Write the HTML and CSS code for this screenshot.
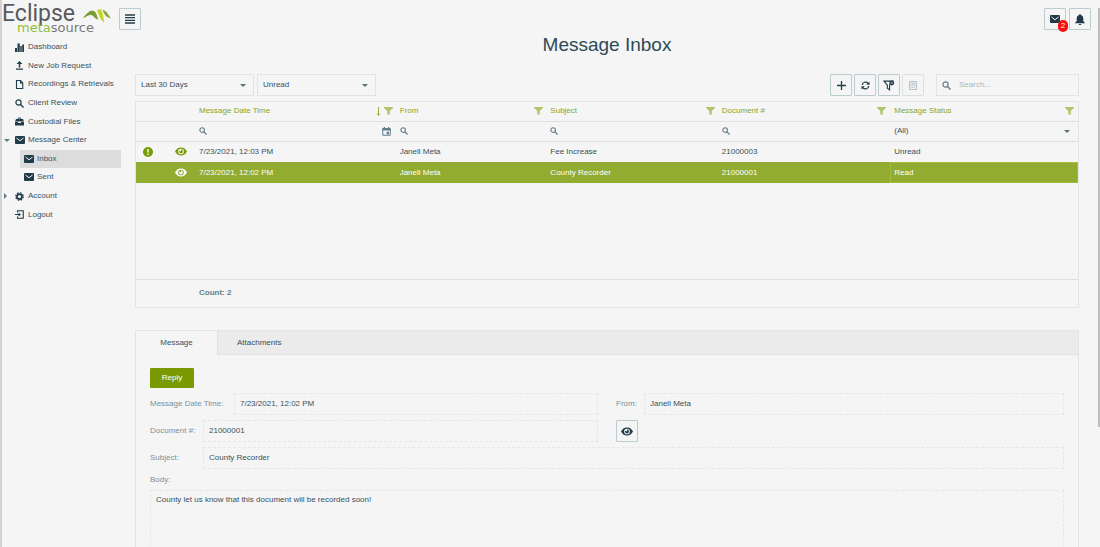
FILE: index.html
```html
<!DOCTYPE html>
<html lang="en">
<head>
<meta charset="utf-8">
<title>Message Inbox</title>
<link rel="stylesheet" href="styles.css">
</head>
<body>
<svg class="defs" aria-hidden="true">
  <symbol id="mail" viewBox="0 0 20 16"><path d="M2 0h16a2 2 0 0 1 2 2v12a2 2 0 0 1-2 2H2a2 2 0 0 1-2-2V2a2 2 0 0 1 2-2z"/><path d="M3 4l7 5.500L17 4" fill="none" stroke="#f5f5f5" stroke-width="2"/></symbol>
  <symbol id="eye" viewBox="0 0 24 18"><path fill-rule="evenodd" d="M12 1C6.500 1 2.300 4.300 0 9c2.300 4.700 6.500 8 12 8s9.700-3.300 12-8c-2.300-4.700-6.500-8-12-8zm0 2.300a5.700 5.700 0 1 1 0 11.400 5.700 5.700 0 0 1 0-11.400z"/><path d="M12 5.200a3.800 3.800 0 1 1-3.800 3.800c0-.7.200-1.300.4-1.800.3.900 1 1.400 1.800 1.400 1.100 0 1.900-.8 1.900-1.800 0-.7-.4-1.300-1-1.600z"/></symbol>
  <symbol id="search" viewBox="0 0 18 18"><circle cx="7" cy="7" r="5.200" fill="none" stroke="currentColor" stroke-width="2.400"/><path d="M11 11l6 6" stroke="currentColor" stroke-width="2.800"/></symbol>
  <symbol id="funnel" viewBox="0 0 18 16"><path d="M0 0h18v2l-6.500 6v8l-5-2V8L0 2z"/></symbol>
</svg>
<div class="app">
  <header class="topbar">
    <a class="logo" href="#" aria-label="Eclipse metasource">
      <span class="logo-name">Eclipse</span>
      <svg class="logo-mark" viewBox="0 0 28 14" aria-hidden="true"><path d="M0 9C4 4 8 0 11 2c3 2 3 6 4.500 8.500C12 10.500 11 6.500 8 6 5 5.500 3 8.500 0 9z" fill="#789f35"/><path d="M14 1l4-1c1.500 4 3 8 3 13.500C17.500 11 15.500 6 14 1z" fill="#c5d92d"/><path d="M19.500 1c4 .3 5.500 4.500 8.500 8.500-4-.8-7-4-8.500-8.500z" fill="#85a83c"/></svg>
      <span class="logo-sub"><b>meta</b>source</span>
    </a>
    <button class="icon-btn" aria-label="Toggle menu"><svg width="10" height="10" viewBox="0 0 10 10"><path d="M0 1h10M0 3.700h10M0 6.400h10M0 9h10" stroke="currentColor" stroke-width="1.300"/></svg></button>
    <div class="top-actions">
      <button class="icon-btn" aria-label="Messages"><svg width="10" height="8"><use href="#mail"/></svg><span class="badge">2</span></button>
      <button class="icon-btn" aria-label="Notifications"><svg width="10" height="11" viewBox="0 0 18 20"><path d="M9 0c1 0 1.500.7 1.500 1.600C13.500 2.300 15 5 15 8v5l3 3v1H0v-1l3-3V8c0-3 1.500-5.700 4.500-6.400C7.500.7 8 0 9 0zM6.500 18h5c0 1.200-1 2-2.500 2s-2.500-.8-2.500-2z"/></svg></button>
    </div>
  </header>

  <div class="columns">
    <nav class="sidebar">
      <ul>
        <li><a href="#"><svg viewBox="0 0 18 18"><path d="M0 10h4v8H0zM5 1h4.500v17H5zM10.500 6h3v12h-3zM14.500 3H18v15h-3.500z"/></svg>Dashboard</a></li>
        <li><a href="#"><svg viewBox="0 0 18 18"><path d="M9 0l6 6h-4.500v7h-3V6H3zM2 15h14v2.500H2z"/></svg>New Job Request</a></li>
        <li><a href="#"><svg viewBox="0 0 18 18"><path d="M3 1h8l4.500 5v11H3z" fill="none" stroke="currentColor" stroke-width="2.200"/><path d="M10 1v6h6z"/></svg>Recordings &amp; Retrievals</a></li>
        <li><a href="#"><svg><use href="#search"/></svg>Client Review</a></li>
        <li><a href="#"><svg viewBox="0 0 18 18"><path fill-rule="evenodd" d="M5 4l2-3h4l2 3h3l2 5H0l2-5zm2 0h4l-1-1.500H8zM0 10h6v2h6v-2h6v7H0z"/></svg>Custodial Files</a></li>
        <li class="open"><a href="#"><svg class="envelope"><use href="#mail"/></svg>Message Center</a></li>
        <li class="sub current"><a href="#" aria-current="page"><svg class="envelope"><use href="#mail"/></svg>Inbox</a></li>
        <li class="sub"><a href="#"><svg class="envelope"><use href="#mail"/></svg>Sent</a></li>
        <li class="closed"><a href="#"><svg viewBox="0 0 18 18"><circle cx="9" cy="9" r="5" fill="none" stroke="currentColor" stroke-width="3.500"/><circle cx="9" cy="9" r="7.500" fill="none" stroke="currentColor" stroke-width="2.500" stroke-dasharray="3.200 2.690"/></svg>Account</a></li>
        <li><a href="#"><svg viewBox="0 0 18 18"><path d="M5 5V1.500h11.500v15H5V13" fill="none" stroke="currentColor" stroke-width="2.200"/><path d="M0 8h7V5l5 4-5 4v-3H0z"/></svg>Logout</a></li>
      </ul>
    </nav>

    <main class="main">
      <h1>Message Inbox</h1>
      <div class="toolbar">
        <span class="select"><select aria-label="Period"><option>Last 30 Days</option></select></span>
        <span class="select"><select aria-label="Read state"><option>Unread</option></select></span>
        <div class="tools">
          <button class="icon-btn" aria-label="Add"><svg width="9" height="9" viewBox="0 0 9 9"><path d="M4.500 0v9M0 4.500h9" stroke="currentColor" stroke-width="1.300"/></svg></button>
          <button class="icon-btn" aria-label="Refresh"><svg width="9" height="9" viewBox="0 0 18 18"><path d="M2.500 8A6.500 6.500 0 0 1 14 4.500M15.500 10A6.500 6.500 0 0 1 4 13.500" fill="none" stroke="currentColor" stroke-width="2.400"/><path d="M17 1v6.500h-6.500zM1 17v-6.500h6.500z"/></svg></button>
          <button class="icon-btn" aria-label="Clear filter"><svg width="12" height="11" viewBox="0 0 22 20"><path d="M2 2h16l-6 7.500V18l-4-3V9.500z" fill="none" stroke="currentColor" stroke-width="2"/><circle cx="16" cy="5.500" r="4.500"/><path d="M14.500 4l3 3m0-3l-3 3" stroke="#f5f5f5" stroke-width="1"/></svg></button>
          <button class="icon-btn" aria-label="Export" disabled><svg width="8" height="9" viewBox="0 0 16 18"><path d="M1 1h14v16H1zM1 8h14M4 4.500h8M4 12.500h8" fill="none" stroke="currentColor" stroke-width="2"/></svg></button>
        </div>
        <label class="search"><svg width="9" height="9"><use href="#search"/></svg><input type="search" placeholder="Search..." aria-label="Search"></label>
      </div>

      <section class="grid">
        <table>
          <colgroup><col class="c-icon"><col class="c-icon"><col class="c-date"><col class="c-from"><col class="c-mid"><col class="c-mid"><col></colgroup>
          <thead>
            <tr>
              <th></th><th></th>
              <th><div class="cell">Message Date Time<span class="marks"><svg class="sort" viewBox="0 0 5 10"><path d="M2.500 0v9M1 7.500l1.500 2L4 7.500" fill="none" stroke="currentColor"/></svg><svg class="funnel"><use href="#funnel"/></svg></span></div></th>
              <th><div class="cell">From<svg class="funnel"><use href="#funnel"/></svg></div></th>
              <th><div class="cell">Subject<svg class="funnel"><use href="#funnel"/></svg></div></th>
              <th><div class="cell">Document #<svg class="funnel"><use href="#funnel"/></svg></div></th>
              <th><div class="cell">Message Status<svg class="funnel"><use href="#funnel"/></svg></div></th>
            </tr>
            <tr class="filters">
              <td></td><td></td>
              <td><div class="cell"><svg class="find"><use href="#search"/></svg><input aria-label="Filter date"><svg class="calendar" viewBox="0 0 18 18"><path d="M1.500 3h15v13.500h-15z" fill="none" stroke="currentColor" stroke-width="2"/><path d="M1 3h16v4H1zM3.500 0h2.500v4H3.500zM12 0h2.500v4H12zM9 9.500h5v5H9z"/></svg></div></td>
              <td><div class="cell"><svg class="find"><use href="#search"/></svg><input aria-label="Filter from"></div></td>
              <td><div class="cell"><svg class="find"><use href="#search"/></svg><input aria-label="Filter subject"></div></td>
              <td><div class="cell"><svg class="find"><use href="#search"/></svg><input aria-label="Filter document"></div></td>
              <td><span class="select"><select aria-label="Filter status"><option>(All)</option></select></span></td>
            </tr>
          </thead>
          <tbody>
            <tr>
              <td class="mark"><svg class="alert" viewBox="0 0 20 20"><circle cx="10" cy="10" r="10"/><path d="M10 4v7M10 13v3" stroke="#f5f5f5" stroke-width="3"/></svg></td>
              <td class="mark"><svg class="eye"><use href="#eye"/></svg></td>
              <td>7/23/2021, 12:03 PM</td><td>Janell Meta</td><td>Fee Increase</td><td>21000003</td><td>Unread</td>
            </tr>
            <tr class="selected">
              <td></td>
              <td class="mark"><svg class="eye"><use href="#eye"/></svg></td>
              <td>7/23/2021, 12:02 PM</td><td>Janell Meta</td><td>County Recorder</td><td>21000001</td><td class="focused">Read</td>
            </tr>
          </tbody>
        </table>
        <div class="grid-footer">Count: 2</div>
      </section>

      <section class="panel">
        <div class="tabs" role="tablist">
          <button role="tab" aria-selected="true">Message</button>
          <button role="tab" aria-selected="false">Attachments</button>
        </div>
        <form class="details">
          <button type="button" class="reply">Reply</button>
          <div class="pair">
            <div class="field wide"><label for="date">Message Date Time:</label><input id="date" value="7/23/2021, 12:02 PM" readonly></div>
            <div class="field short"><label for="from">From:</label><input id="from" value="Janell Meta" readonly></div>
          </div>
          <div class="pair">
            <div class="field"><label for="doc">Document #:</label><input id="doc" value="21000001" readonly></div>
            <button type="button" class="icon-btn" aria-label="View document"><svg width="12" height="9"><use href="#eye"/></svg></button>
          </div>
          <div class="field"><label for="subject">Subject:</label><input id="subject" value="County Recorder" readonly></div>
          <label class="body-label" for="body">Body:</label>
          <textarea id="body" readonly>County let us know that this document will be recorded soon!</textarea>
        </form>
      </section>
    </main>
  </div>
  <div class="scroll-thumb"></div>
</div>
</body>
</html>
```

FILE: styles.css
```css
* { box-sizing: border-box; }
body {
  margin: 0;
  background: #f5f5f5;
  color: #38515c;
  font: 8px/12px "Liberation Sans", Arial, sans-serif;
}
button, input, select, textarea { font: inherit; color: inherit; }
input, select, textarea { width: 100%; min-width: 0; margin: 0; border: 0; background: none; outline: 0; appearance: none; }
svg { display: block; flex: none; fill: currentColor; }
a { color: inherit; text-decoration: none; }
.defs { position: absolute; width: 0; height: 0; }

.app {
  height: 100vh;
  overflow: hidden;
  display: flex;
  flex-direction: column;
  border-left: 2px solid #d2d2d2;
}
.scroll-thumb { position: fixed; right: 0; top: 8px; width: 2px; height: 419px; background: #bdbdbd; }

.topbar { display: flex; align-items: flex-start; padding: 0 9px 0 0; height: 36px; }
.topbar .icon-btn { margin-top: 8px; }
.logo { display: grid; grid-template-columns: 81px 28px; width: 117px; }
.logo-name { font: 23px/27px Roboto, sans-serif; color: #58595c; }
.logo-mark { width: 28px; height: 14px; margin-top: 9px; }
.logo-sub { grid-column: 1 / 3; padding-left: 15px; margin-top: -6px; font: 13px/13px "DejaVu Sans", sans-serif; color: #77787b; }
.logo-sub b { font-weight: 400; color: #94bd3a; }
.top-actions { display: flex; gap: 3px; margin-left: auto; }

.icon-btn {
  position: relative;
  display: flex;
  align-items: center;
  justify-content: center;
  width: 22px;
  height: 22px;
  padding: 0;
  border: 1px solid #bccbd0;
  border-radius: 1px;
  background: none;
  color: #203c48;
}
.icon-btn:disabled { border-color: #dae1e3; color: #b5c0c4; }
.badge {
  position: absolute;
  right: -3px;
  bottom: -3px;
  width: 10px;
  height: 12px;
  border-radius: 5px;
  background: #f90d0d;
  color: #fff;
}

.columns { flex: 1; min-height: 0; display: flex; gap: 14px; padding-right: 21px; }
.sidebar { width: 119px; flex: none; }
.sidebar ul { display: grid; grid-auto-rows: 1fr; height: 186px; margin: 2px 0 0; padding: 0; list-style: none; }
.sidebar li { position: relative; display: flex; padding-left: 13px; }
.sidebar a { display: flex; align-items: center; gap: 4px; white-space: nowrap; }
.sidebar svg { width: 9px; height: 9px; color: #203c48; }
.sidebar .envelope { width: 10px; height: 8px; margin-right: -1px; }
.sidebar .sub { margin-left: 18px; padding-left: 4px; }
.sidebar .current { background: #dcdcdc; }
.sidebar .open::before, .sidebar .closed::before { content: ""; position: absolute; left: 2px; top: 8px; border: 3px solid transparent; }
.sidebar .open::before { border-top-color: #607d8b; border-bottom: 0; }
.sidebar .closed::before { border-left-color: #607d8b; border-right: 0; top: 6px; }

.main { flex: 1; min-width: 0; display: flex; flex-direction: column; }
h1 { margin: 0; font-size: 19px; line-height: 18px; font-weight: 400; text-align: center; color: #2d4a56; }

.toolbar { display: flex; gap: 3px; margin: 20px 0 5px; }
.select { position: relative; display: block; }
.select::after { content: ""; position: absolute; right: 7px; top: 50%; border: 3px solid transparent; border-top-color: #58717c; border-bottom: 0; margin-top: -1px; }
.toolbar .select { width: 119px; height: 22px; border: 1px solid #e3e3e3; }
.toolbar select { height: 20px; padding: 0 5px; }
.tools { display: flex; gap: 2px; margin: 0 9px 0 auto; }
.search { display: flex; align-items: center; gap: 6px; width: 143px; height: 22px; padding: 0 5px; border: 1px solid #e3e3e3; color: #607d8b; }
.search input::placeholder { color: #a9b8be; }

.grid { border: 1px solid #e4e4e4; }
table { width: 100%; table-layout: fixed; border-collapse: collapse; }
.grid table { margin-bottom: 96px; }
.c-icon { width: 30px; }
.c-date { width: 21.3%; }
.c-from { width: 16%; }
.c-mid { width: 18.2%; }
th, td { height: 20px; padding: 0 4px 0 3px; text-align: left; font-weight: 400; }
th { height: 19px; color: #86a62b; }
tbody td { height: 21px; }
thead tr { border-bottom: 1px solid #e0e0e0; }
.cell { display: flex; align-items: center; justify-content: space-between; }
.marks { display: flex; align-items: center; gap: 3px; }
.sort { width: 5px; height: 9px; }
.funnel { width: 9px; height: 8px; color: #b2c56d; }
.find { width: 8px; height: 8px; color: #607d8b; }
.calendar { width: 9px; height: 9px; color: #607d8b; margin-right: 2px; }
.filters input { height: 12px; padding: 0 4px; }
.filters .select::after { right: 4px; }
.mark { color: #7a9c08; }
.mark svg { margin: 0 auto; }
.alert { width: 10px; height: 10px; }
.eye { width: 12px; height: 9px; }
.selected { background: #92ab31; color: #fff; }
.selected .mark { color: #fff; }
.focused { box-shadow: inset 0 0 0 1px #a6bd38; }
.mark:first-child { padding-right: 9px; }
th:last-child, td:last-child { padding-left: 4px; }
.grid-footer { height: 28px; padding: 0 63px; border-top: 1px solid #e0e0e0; line-height: 26px; font-weight: 700; color: #607d8b; }

.panel { flex: 1; display: flex; flex-direction: column; margin-top: 22px; border: 1px solid #e4e4e4; border-bottom: 0; }
.tabs { display: flex; background: #ebebeb; box-shadow: inset 0 -1px #e0e0e0; }
.tabs button { height: 24px; padding: 0 19px; border: 0; background: none; }
.tabs button[aria-selected="true"] { width: 82px; background: #f5f5f5; border-right: 1px solid #e0e0e0; }
.details { flex: 1; display: flex; flex-direction: column; gap: 5px; padding: 13px 14px 0; }
.reply { width: 44px; height: 20px; border: 0; border-radius: 1px; background: #7a9a01; color: #fff; }
.pair { display: grid; grid-template-columns: 1fr 1fr; gap: 18px; }
.field { display: flex; align-items: center; }
.field label { flex: none; width: 53px; }
.field.wide label { width: 84px; }
.field.short label { width: 28px; }
label { color: #78909c; }
.field input { height: 22px; padding: 0 5px 2px; border: 1px dashed #e6e6e6; }
.body-label { line-height: 11px; }
textarea { flex: 1; min-height: 66px; padding: 3px 5px; border: 1px dashed #e6e6e6; border-bottom: 0; resize: none; }
```
